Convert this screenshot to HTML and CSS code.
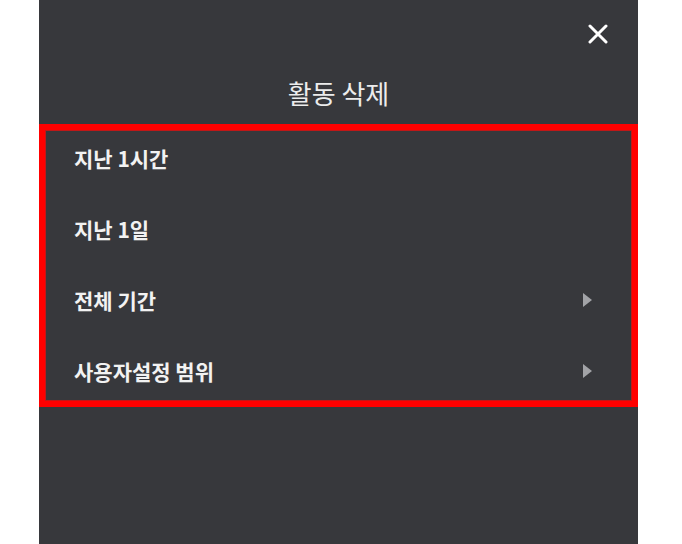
FILE: index.html
```html
<!DOCTYPE html>
<html>
    <head>
        <meta charset="utf-8">
        <title>활동 삭제</title>
<link rel="stylesheet" href="styles.css">
    </head>
    <body>
        <div class="panel">
            <div class="topbar">
                <svg class="close" width="20" height="20" viewBox="0 0 20 20">
                    <path d="M2 2 L18 18 M18 2 L2 18" stroke="#ffffff" stroke-width="3" stroke-linecap="round"/>
                </svg>
            </div>
            <div class="title">활동 삭제</div>
            <div class="options">
                <div class="row">지난 1시간</div>
                <div class="row">지난 1일</div>
                <div class="row">전체 기간 <span class="arrow"></span></div>
                <div class="row">사용자설정 범위 <span class="arrow"></span></div>
            </div>
        </div>
    </body>
</html>
```

FILE: styles.css
```css
body {
  margin: 0;
  background-color: #ffffff;
  font-family: "Noto Sans CJK KR", "Noto Sans", sans-serif;
}

.panel {
  width: 599px;
  height: 544px;
  margin-left: 39px;
  background-color: #37383c;
  display: flex;
  flex-direction: column;
}

.topbar {
  display: flex;
  justify-content: flex-end;
  padding: 24px 30px 0 0;
}

.close {
  display: block;
}

.title {
  margin-top: 30px;
  text-align: center;
  font-size: 26px;
  line-height: 38px;
  color: #ececec;
}

.options {
  margin-top: 12px;
  border: 6px solid #ff0000;
  box-shadow: inset 0 0 0 1px #c01818;
  padding: 1px 40px 3px 29px;
  display: flex;
  flex-direction: column;
  gap: 17px;
}

.row {
  height: 54px;
  display: flex;
  align-items: center;
  justify-content: space-between;
  font-size: 21px;
  font-weight: bold;
  color: #f2f2f2;
}

.arrow {
  width: 0;
  height: 0;
  border-top: 7px solid transparent;
  border-bottom: 7px solid transparent;
  border-left: 9px solid #a2a3a7;
}
```
